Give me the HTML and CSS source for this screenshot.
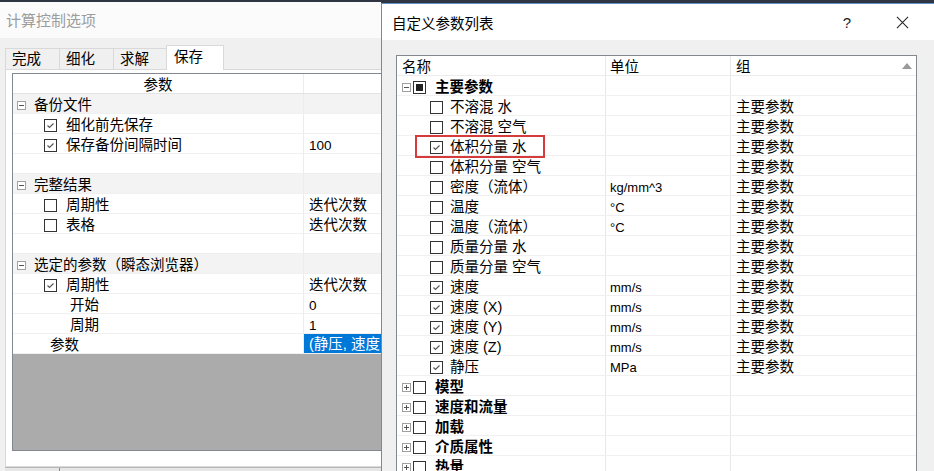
FILE: index.html
```html
<!DOCTYPE html>
<html lang="zh-CN">
<head>
    <meta charset="UTF-8">
    <title>计算控制选项</title>
    <link rel="stylesheet" href="styles.css">
</head>
<body>
<div class="desktop">

    <!-- 计算控制选项窗口 -->
    <section class="win options">
        <header class="win-title">计算控制选项</header>
        <div class="win-body">
            <div class="tabs">
                <span class="tab">完成</span>
                <span class="tab">细化</span>
                <span class="tab">求解</span>
                <span class="tab active">保存</span>
            </div>
            <div class="tab-panel">
                <div class="prop-grid">
                    <div class="pg-row pg-head"><span class="pg-name">参数</span><span class="pg-val"></span></div>
                    <div class="pg-row pg-cat"><span class="pg-name"><i class="tog"></i>备份文件</span><span class="pg-val"></span></div>
                    <div class="pg-row"><span class="pg-name lv1"><i class="cb on"><svg viewBox="0 0 11 11"><polyline points="2.5,5.5 4.5,7.5 8.5,3.5"/></svg></i>细化前先保存</span><span class="pg-val"></span></div>
                    <div class="pg-row"><span class="pg-name lv1"><i class="cb on"><svg viewBox="0 0 11 11"><polyline points="2.5,5.5 4.5,7.5 8.5,3.5"/></svg></i>保存备份间隔时间</span><span class="pg-val num">100</span></div>
                    <div class="pg-row"><span class="pg-name"></span><span class="pg-val"></span></div>
                    <div class="pg-row pg-cat"><span class="pg-name"><i class="tog"></i>完整结果</span><span class="pg-val"></span></div>
                    <div class="pg-row"><span class="pg-name lv1"><i class="cb"></i>周期性</span><span class="pg-val">迭代次数</span></div>
                    <div class="pg-row"><span class="pg-name lv1"><i class="cb"></i>表格</span><span class="pg-val">迭代次数</span></div>
                    <div class="pg-row"><span class="pg-name"></span><span class="pg-val"></span></div>
                    <div class="pg-row pg-cat"><span class="pg-name"><i class="tog"></i>选定的参数（瞬态浏览器）</span><span class="pg-val"></span></div>
                    <div class="pg-row"><span class="pg-name lv1"><i class="cb on"><svg viewBox="0 0 11 11"><polyline points="2.5,5.5 4.5,7.5 8.5,3.5"/></svg></i>周期性</span><span class="pg-val">迭代次数</span></div>
                    <div class="pg-row"><span class="pg-name lv2">开始</span><span class="pg-val num">0</span></div>
                    <div class="pg-row"><span class="pg-name lv2">周期</span><span class="pg-val num">1</span></div>
                    <div class="pg-row"><span class="pg-name lv0">参数</span><span class="pg-val selected">(静压, 速度, 速度 (X))</span></div>
                    <div class="pg-empty"></div>
                </div>
            </div>
            <div class="bottom-bar"><span class="bar-seg"></span></div>
        </div>
    </section>

    <!-- 自定义参数列表对话框 -->
    <section class="win dialog">
        <header class="dlg-title">
            <span>自定义参数列表</span>
            <span class="dlg-help">?</span>
            <span class="dlg-close"><svg viewBox="0 0 14 14"><path d="M1 1 L13 13 M13 1 L1 13"/></svg></span>
        </header>
        <div class="dlg-body">
            <div class="param-list">
                <div class="pl-row pl-head"><span>名称</span><span>单位</span><span class="pl-grp">组<i class="sort-up"></i></span></div>

                <div class="pl-row group"><span><i class="tog"></i><i class="cb part"></i>主要参数</span><span></span><span></span></div>
                <div class="pl-row"><span class="child"><i class="cb"></i>不溶混 水</span><span></span><span>主要参数</span></div>
                <div class="pl-row"><span class="child"><i class="cb"></i>不溶混 空气</span><span></span><span>主要参数</span></div>
                <div class="pl-row"><span class="child"><i class="cb on"><svg viewBox="0 0 11 11"><polyline points="2.5,5.5 4.5,7.5 8.5,3.5"/></svg></i>体积分量 水</span><span></span><span>主要参数</span><b class="mark"></b></div>
                <div class="pl-row"><span class="child"><i class="cb"></i>体积分量 空气</span><span></span><span>主要参数</span></div>
                <div class="pl-row"><span class="child"><i class="cb"></i>密度（流体）</span><span class="unit">kg/mm^3</span><span>主要参数</span></div>
                <div class="pl-row"><span class="child"><i class="cb"></i>温度</span><span class="unit">°C</span><span>主要参数</span></div>
                <div class="pl-row"><span class="child"><i class="cb"></i>温度（流体）</span><span class="unit">°C</span><span>主要参数</span></div>
                <div class="pl-row"><span class="child"><i class="cb"></i>质量分量 水</span><span></span><span>主要参数</span></div>
                <div class="pl-row"><span class="child"><i class="cb"></i>质量分量 空气</span><span></span><span>主要参数</span></div>
                <div class="pl-row"><span class="child"><i class="cb on"><svg viewBox="0 0 11 11"><polyline points="2.5,5.5 4.5,7.5 8.5,3.5"/></svg></i>速度</span><span class="unit">mm/s</span><span>主要参数</span></div>
                <div class="pl-row"><span class="child"><i class="cb on"><svg viewBox="0 0 11 11"><polyline points="2.5,5.5 4.5,7.5 8.5,3.5"/></svg></i>速度 (X)</span><span class="unit">mm/s</span><span>主要参数</span></div>
                <div class="pl-row"><span class="child"><i class="cb on"><svg viewBox="0 0 11 11"><polyline points="2.5,5.5 4.5,7.5 8.5,3.5"/></svg></i>速度 (Y)</span><span class="unit">mm/s</span><span>主要参数</span></div>
                <div class="pl-row"><span class="child"><i class="cb on"><svg viewBox="0 0 11 11"><polyline points="2.5,5.5 4.5,7.5 8.5,3.5"/></svg></i>速度 (Z)</span><span class="unit">mm/s</span><span>主要参数</span></div>
                <div class="pl-row"><span class="child"><i class="cb on"><svg viewBox="0 0 11 11"><polyline points="2.5,5.5 4.5,7.5 8.5,3.5"/></svg></i>静压</span><span class="unit">MPa</span><span>主要参数</span></div>

                <div class="pl-row group"><span><i class="tog plus"></i><i class="cb"></i>模型</span><span></span><span></span></div>
                <div class="pl-row group"><span><i class="tog plus"></i><i class="cb"></i>速度和流量</span><span></span><span></span></div>
                <div class="pl-row group"><span><i class="tog plus"></i><i class="cb"></i>加载</span><span></span><span></span></div>
                <div class="pl-row group"><span><i class="tog plus"></i><i class="cb"></i>介质属性</span><span></span><span></span></div>
                <div class="pl-row group"><span><i class="tog plus"></i><i class="cb"></i>热量</span><span></span><span></span></div>
            </div>
        </div>
    </section>

</div>
</body>
</html>
```

FILE: styles.css
```css
/* 桌面与窗口 */
* { box-sizing: border-box; }
body { margin: 0; background: #2f3542; font-family: "Liberation Sans", "Noto Sans CJK SC", sans-serif; font-size: 14.5px; color: #000; }
.desktop { position: relative; width: 934px; height: 471px; overflow: hidden; }
.win { position: absolute; display: flex; flex-direction: column; overflow: hidden; }
i { font-style: normal; }

/* 左侧：计算控制选项 */
.options { left: 0; top: 2px; width: 381px; height: 469px; background: #f0f0f0; }
.win-title { height: 36px; line-height: 37px; padding-left: 6px; background: #fbfbfb; color: #9c9c9c; font-size: 15px; flex-shrink: 0; }
.win-body { flex: 1; min-height: 0; display: flex; flex-direction: column; padding: 7px 0 0 5px; }
.tabs { display: flex; align-items: flex-end; height: 24px; flex-shrink: 0; position: relative; z-index: 1; }
.tab { height: 21px; line-height: 21px; padding-left: 6px; border: 1px solid #d9d9d9; border-bottom: none; margin-right: -1px; background: #f0f0f0; }
.tab:nth-child(1) { width: 55px; }
.tab:nth-child(2) { width: 55px; }
.tab:nth-child(3) { width: 54px; }
.tab.active { width: 58px; height: 25px; line-height: 22px; padding-left: 7px; background: #fff; margin-bottom: -1px; }
.tab-panel { flex: 1; min-height: 0; width: 400px; display: flex; flex-direction: column; background: #fff; border: 1px solid #d9d9d9; border-right: none; padding: 3px 0 15px 6px; }
.prop-grid { flex: 1; display: flex; flex-direction: column; border: 1px solid #828790; border-right: none; overflow: hidden; }
.pg-row { display: grid; grid-template-columns: 290px 1fr; height: 20px; line-height: 15px; border-bottom: 1px solid #f0f0f0; flex-shrink: 0; white-space: nowrap; }
.pg-row > span { padding-top: 4px; }
.pg-name { display: flex; align-items: center; padding-left: 4px; }
.pg-val { border-left: 1px solid #ececec; padding-left: 5px; overflow: hidden; }
.pg-head .pg-name { justify-content: center; padding-left: 0; }
.pg-head { border-bottom-color: #e3e3e3; }
.pg-cat { background: #f3f3f3; }
.pg-cat .tog { margin-right: 8px; }
.pg-name.lv0 { padding-left: 37px; }
.pg-name.lv1 { padding-left: 31px; }
.lv1 .cb { margin-right: 9px; }
.pg-name.lv2 { padding-left: 57px; }
.num { font-size: 13.5px; }
.pg-row > .selected { background: #0078d7; color: #fff; padding-top: 3px; }
.pg-empty { flex: 1; background: #ababab; }
.bottom-bar { height: 4px; flex-shrink: 0; border-top: 1px solid #b8b8b8; background: #e6e6e6; position: relative; }
.bar-seg { position: absolute; left: 54px; top: 0; bottom: 0; border-left: 1px solid #888; }

/* 展开框 / 复选框 */
.tog { position: relative; display: inline-block; width: 9px; height: 9px; border: 1px solid #a0a0a0; background: #fff; flex-shrink: 0; }
.tog::before { content: ""; position: absolute; left: 1px; right: 1px; top: 3px; height: 1px; background: #555; }
.tog.plus::after { content: ""; position: absolute; top: 1px; bottom: 1px; left: 3px; width: 1px; background: #555; }
.cb { display: inline-flex; align-items: center; justify-content: center; width: 13px; height: 13px; border: 1px solid #333; background: #fff; flex-shrink: 0; }
.cb svg { width: 11px; height: 11px; }
.cb polyline { fill: none; stroke: #555; stroke-width: 1.1; }
.cb.part::before { content: ""; width: 7px; height: 7px; background: #222; }

/* 右侧：自定义参数列表 */
.dialog { left: 381px; top: 3px; width: 553px; height: 468px; border: 1px solid #5d8fcb; border-right: none; border-bottom: none; background: #f0f0f0; }
.dlg-title { height: 36px; display: flex; align-items: center; padding-left: 10px; background: #fff; flex-shrink: 0; }
.dlg-help { margin-left: auto; width: 30px; text-align: center; font-size: 15px; color: #222; }
.dlg-close { width: 46px; height: 36px; margin-left: 17px; margin-right: 9px; display: flex; align-items: center; justify-content: center; }
.dlg-close svg { width: 13px; height: 13px; }
.dlg-close path { stroke: #222; stroke-width: 1.1; }
.dlg-body { flex: 1; min-height: 0; display: flex; flex-direction: column; padding: 15px 17px 0 14px; }
.param-list { flex: 1; background: #fff; border: 1px solid #828790; border-bottom: none; overflow: hidden; }
.pl-row { position: relative; display: grid; grid-template-columns: 208px 125px 1fr; height: 20px; line-height: 15px; border-bottom: 1px solid #f0f0f0; white-space: nowrap; }
.pl-row > span { display: flex; align-items: center; padding-top: 4px; }
.pl-row > span:first-child { padding-left: 5px; }
.pl-row > span:nth-child(2) { border-left: 1px solid #e8e8e8; padding-left: 4px; }
.pl-row > span:nth-child(3) { border-left: 1px solid #e8e8e8; padding-left: 5px; }
.pl-head { border-bottom-color: #ececec; }
.pl-grp { justify-content: flex-start; }
.sort-up { margin-left: auto; margin-right: 4px; margin-top: -4px; width: 0; height: 0; border-left: 5px solid transparent; border-right: 5px solid transparent; border-bottom: 6px solid #9a9a9a; }
.group > span:first-child { font-weight: bold; }
.group .tog { margin-right: 2px; }
.group .cb { margin-right: 9px; }
.pl-row > span.child { padding-left: 33px; }
.child .cb { margin-right: 7px; }
.unit { font-size: 13px; }
.mark { position: absolute; left: 18px; top: -1px; width: 130px; height: 23px; border: 2px solid #d63b3b; }
```
